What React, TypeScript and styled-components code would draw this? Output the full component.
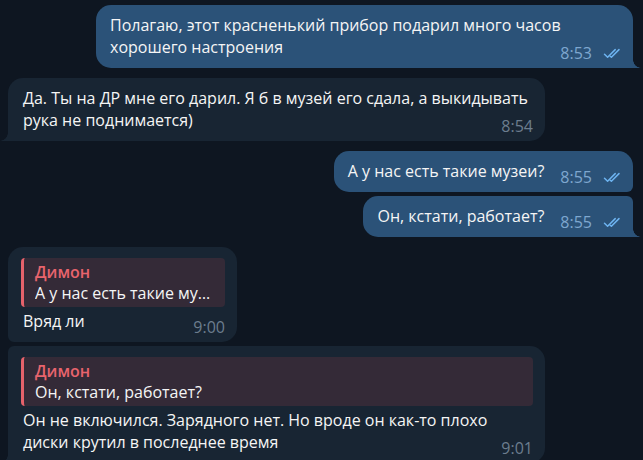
import styled, { createGlobalStyle, css } from 'styled-components';

const GlobalStyle = createGlobalStyle`
	html, body {
		margin: 0;
		padding: 0;
		background: #0e1621;
	}
	body {
		font-family: "Open Sans", "Noto Sans", sans-serif;
		-webkit-font-smoothing: antialiased;
	}
`;

type Pos = 'single' | 'first' | 'last';

interface Reply {
	name: string;
	text: string;
}

interface Message {
	text: string;
	time: string;
	reply?: Reply;
	pos: Pos;
	maxWidth?: number;
}

interface Group {
	out: boolean;
	messages: Message[];
}

const groups: Group[] = [
	{
		out: true,
		messages: [
			{
				text: 'Полагаю, этот красненький прибор подарил много часов хорошего настроения',
				time: '8:53',
				pos: 'single',
			},
		],
	},
	{
		out: false,
		messages: [
			{
				text: 'Да. Ты на ДР мне его дарил. Я б в музей его сдала, а выкидывать рука не поднимается)',
				time: '8:54',
				pos: 'single',
			},
		],
	},
	{
		out: true,
		messages: [
			{ text: 'А у нас есть такие музеи?', time: '8:55', pos: 'first' },
			{ text: 'Он, кстати, работает?', time: '8:55', pos: 'last' },
		],
	},
	{
		out: false,
		messages: [
			{
				text: 'Вряд ли',
				time: '9:00',
				pos: 'first',
				maxWidth: 229,
				reply: { name: 'Димон', text: 'А у нас есть такие музеи?' },
			},
			{
				text: 'Он не включился. Зарядного нет. Но вроде он как-то плохо диски крутил в последнее время',
				time: '9:01',
				pos: 'last',
				reply: { name: 'Димон', text: 'Он, кстати, работает?' },
			},
		],
	},
];

function DoubleCheck() {
	return (
		<svg width="20" height="11" viewBox="0 0 20 11" fill="none">
			<path
				d="M1.5 6.2 L4.6 9.3 L12.2 1.6"
				stroke="#6db3f0"
				strokeWidth="1.5"
				strokeLinecap="round"
				strokeLinejoin="round"
			/>
			<path
				d="M7.2 8.2 L8.4 9.3 L16 1.6"
				stroke="#6db3f0"
				strokeWidth="1.5"
				strokeLinecap="round"
				strokeLinejoin="round"
			/>
		</svg>
	);
}

export default function App() {
	return (
		<>
			<GlobalStyle />
			<Chat>
				{groups.map((group, gi) => (
					<GroupColumn key={gi} $out={group.out}>
						{group.messages.map((msg, mi) => (
							<Bubble key={mi} $out={group.out} $pos={msg.pos} $maxWidth={msg.maxWidth}>
								{msg.reply && (
									<ReplyBlock>
										<ReplyName>{msg.reply.name}</ReplyName>
										<ReplyText>{msg.reply.text}</ReplyText>
									</ReplyBlock>
								)}
								<Body>
									{msg.text}
									<Meta $out={group.out}>
										{msg.time}
										{group.out && <DoubleCheck />}
									</Meta>
								</Body>
							</Bubble>
						))}
					</GroupColumn>
				))}
			</Chat>
		</>
	);
}

const Chat = styled.div`
	height: 460px;
	overflow: hidden;
	display: flex;
	flex-direction: column;
	gap: 10px;
	padding: 5px 10px 0 8px;
	box-sizing: border-box;
`;

const GroupColumn = styled.div<{ $out: boolean }>`
	display: flex;
	flex-direction: column;
	gap: 4px;
	align-items: ${({ $out }) => ($out ? 'flex-end' : 'flex-start')};
`;

const radii = (out: boolean, pos: Pos) => {
	const big = '15px';
	const small = '6px';
	const tail = '0';
	const near = {
		top: pos === 'last' ? small : big,
		bottom: pos === 'first' ? small : tail,
	};
	return out
		? `${big} ${near.top} ${near.bottom} ${big}`
		: `${near.top} ${big} ${big} ${near.bottom}`;
};

const Bubble = styled.div<{ $out: boolean; $pos: Pos; $maxWidth?: number }>`
	position: relative;
	box-sizing: border-box;
	max-width: ${({ $maxWidth }) => ($maxWidth ? `${$maxWidth}px` : '537px')};
	padding: ${({ $out }) => ($out ? '9px 10px 10px 14px' : '9px 12px 10px 15px')};
	background: ${({ $out }) => ($out ? '#2b5278' : '#182533')};
	border-radius: ${({ $out, $pos }) => radii($out, $pos)};
	color: #f5f5f5;

	${({ $pos, $out }) =>
		$pos !== 'first' &&
		css`
			&::after {
				content: '';
				position: absolute;
				bottom: 0;
				width: 8px;
				height: 8px;
				${$out
					? css`
							right: -8px;
							background: radial-gradient(circle at 100% 0, transparent 7.5px, #2b5278 8px);
						`
					: css`
							left: -8px;
							background: radial-gradient(circle at 0 0, transparent 7.5px, #182533 8px);
						`}
			}
		`}
`;

const Body = styled.div`
	font-size: 16px;
	line-height: 22px;
`;

const Meta = styled.span<{ $out: boolean }>`
	float: right;
	position: relative;
	top: 6px;
	display: inline-flex;
	align-items: center;
	gap: 11px;
	margin-left: 16px;
	font-size: 16px;
	line-height: 22px;
	color: ${({ $out }) => ($out ? '#7ea7cf' : '#6c7d8e')};

	svg {
		margin-top: 1px;
	}
`;

const ReplyBlock = styled.div`
	margin: 2px 0 3px -2px;
	padding: 4px 12px 3px 11px;
	border-left: 3px solid #e5626b;
	border-radius: 4px;
	background: #342a37;
	min-width: 0;
`;

const ReplyName = styled.div`
	font-size: 16px;
	line-height: 21px;
	font-weight: 600;
	color: #e8646d;
`;

const ReplyText = styled.div`
	font-size: 16px;
	line-height: 21px;
	white-space: nowrap;
	overflow: hidden;
	text-overflow: ellipsis;
`;
